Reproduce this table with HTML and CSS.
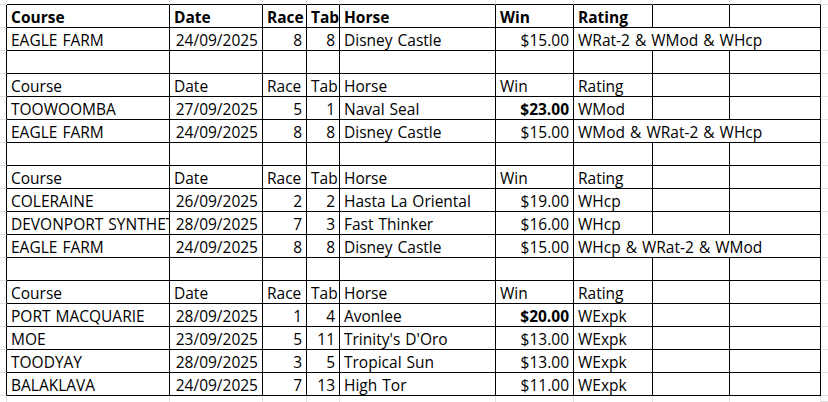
FILE: index.html
```html
<!DOCTYPE html>
<html lang="en">
<head>
<meta charset="utf-8">
<title>Ratings</title>
<link rel="stylesheet" href="styles.css">
</head>
<body>
<div class="sheet">
  <div class="row top">
    <div class="m"></div><div></div><div></div><div></div><div></div><div></div><div></div><div></div><div></div><div></div><div class="r"></div>
  </div>

  <div class="row hdr bold">
    <div class="m"></div><div class="c">Course</div><div class="c">Date</div><div class="c">Race</div><div class="c">Tab</div><div class="c">Horse</div><div class="c">Win</div><div class="c">Rating</div><div class="c"></div><div class="c"></div><div class="r"></div>
  </div>
  <div class="row">
    <div class="m"></div><div class="c">EAGLE FARM</div><div class="c n">24/09/2025</div><div class="c n">8</div><div class="c n">8</div><div class="c">Disney Castle</div><div class="c n">$15.00</div><div class="c span3">WRat-2 &amp; WMod &amp; WHcp</div><div class="r"></div>
  </div>
  <div class="row">
    <div class="m"></div><div class="c"></div><div class="c"></div><div class="c"></div><div class="c"></div><div class="c"></div><div class="c"></div><div class="c"></div><div class="c"></div><div class="c"></div><div class="r"></div>
  </div>

  <div class="row">
    <div class="m"></div><div class="c">Course</div><div class="c">Date</div><div class="c">Race</div><div class="c">Tab</div><div class="c">Horse</div><div class="c">Win</div><div class="c">Rating</div><div class="c"></div><div class="c"></div><div class="r"></div>
  </div>
  <div class="row">
    <div class="m"></div><div class="c">TOOWOOMBA</div><div class="c n">27/09/2025</div><div class="c n">5</div><div class="c n">1</div><div class="c">Naval Seal</div><div class="c n bold">$23.00</div><div class="c">WMod</div><div class="c"></div><div class="c"></div><div class="r"></div>
  </div>
  <div class="row">
    <div class="m"></div><div class="c">EAGLE FARM</div><div class="c n">24/09/2025</div><div class="c n">8</div><div class="c n">8</div><div class="c">Disney Castle</div><div class="c n">$15.00</div><div class="c span3">WMod &amp; WRat-2 &amp; WHcp</div><div class="r"></div>
  </div>
  <div class="row">
    <div class="m"></div><div class="c"></div><div class="c"></div><div class="c"></div><div class="c"></div><div class="c"></div><div class="c"></div><div class="c"></div><div class="c"></div><div class="c"></div><div class="r"></div>
  </div>

  <div class="row">
    <div class="m"></div><div class="c">Course</div><div class="c">Date</div><div class="c">Race</div><div class="c">Tab</div><div class="c">Horse</div><div class="c">Win</div><div class="c">Rating</div><div class="c"></div><div class="c"></div><div class="r"></div>
  </div>
  <div class="row">
    <div class="m"></div><div class="c">COLERAINE</div><div class="c n">26/09/2025</div><div class="c n">2</div><div class="c n">2</div><div class="c">Hasta La Oriental</div><div class="c n">$19.00</div><div class="c">WHcp</div><div class="c"></div><div class="c"></div><div class="r"></div>
  </div>
  <div class="row">
    <div class="m"></div><div class="c">DEVONPORT SYNTHETIC</div><div class="c n">28/09/2025</div><div class="c n">7</div><div class="c n">3</div><div class="c">Fast Thinker</div><div class="c n">$16.00</div><div class="c">WHcp</div><div class="c"></div><div class="c"></div><div class="r"></div>
  </div>
  <div class="row">
    <div class="m"></div><div class="c">EAGLE FARM</div><div class="c n">24/09/2025</div><div class="c n">8</div><div class="c n">8</div><div class="c">Disney Castle</div><div class="c n">$15.00</div><div class="c span3">WHcp &amp; WRat-2 &amp; WMod</div><div class="r"></div>
  </div>
  <div class="row">
    <div class="m"></div><div class="c"></div><div class="c"></div><div class="c"></div><div class="c"></div><div class="c"></div><div class="c"></div><div class="c"></div><div class="c"></div><div class="c"></div><div class="r"></div>
  </div>

  <div class="row">
    <div class="m"></div><div class="c">Course</div><div class="c">Date</div><div class="c">Race</div><div class="c">Tab</div><div class="c">Horse</div><div class="c">Win</div><div class="c">Rating</div><div class="c"></div><div class="c"></div><div class="r"></div>
  </div>
  <div class="row">
    <div class="m"></div><div class="c">PORT MACQUARIE</div><div class="c n">28/09/2025</div><div class="c n">1</div><div class="c n">4</div><div class="c">Avonlee</div><div class="c n bold">$20.00</div><div class="c">WExpk</div><div class="c"></div><div class="c"></div><div class="r"></div>
  </div>
  <div class="row">
    <div class="m"></div><div class="c">MOE</div><div class="c n">23/09/2025</div><div class="c n">5</div><div class="c n">11</div><div class="c">Trinity's D'Oro</div><div class="c n">$13.00</div><div class="c">WExpk</div><div class="c"></div><div class="c"></div><div class="r"></div>
  </div>
  <div class="row">
    <div class="m"></div><div class="c">TOODYAY</div><div class="c n">28/09/2025</div><div class="c n">3</div><div class="c n">5</div><div class="c">Tropical Sun</div><div class="c n">$13.00</div><div class="c">WExpk</div><div class="c"></div><div class="c"></div><div class="r"></div>
  </div>
  <div class="row">
    <div class="m"></div><div class="c">BALAKLAVA</div><div class="c n">24/09/2025</div><div class="c n">7</div><div class="c n">13</div><div class="c">High Tor</div><div class="c n">$11.00</div><div class="c">WExpk</div><div class="c"></div><div class="c"></div><div class="r"></div>
  </div>

  <div class="row bottom">
    <div class="m"></div><div></div><div></div><div></div><div></div><div></div><div></div><div></div><div></div><div></div><div class="r"></div>
  </div>
</div>
</body>
</html>
```

FILE: styles.css
```css
html, body {
  margin: 0;
  padding: 0;
  background: #ffffff;
}

body {
  font-family: "Open Sans", "Liberation Sans", sans-serif;
  font-size: 15.5px;
  word-spacing: 1px;
  color: #000000;
}

.sheet {
  display: grid;
  width: 828px;
  height: 402px;
  grid-template-columns: 7px 163px 93px 44px 33px 156px 78px 79px 77px 91px 1fr;
  grid-template-rows: 5px repeat(17, 23px) 1fr;
  overflow: hidden;
}

.row {
  display: contents;
}

.sheet > .row > div {
  box-sizing: border-box;
  min-width: 0;
}

/* gridlines of the sheet outside the bordered table */
.top > div {
  border-right: 1px solid #e1e1e1;
  border-bottom: 1px solid #000000;
}

.top > .m,
.top > .r {
  border-bottom-color: #e1e1e1;
}

.bottom > div {
  border-right: 1px solid #e1e1e1;
}

.m {
  border-right: 1px solid #000000;
  border-bottom: 1px solid #e1e1e1;
}

.r {
  border-bottom: 1px solid #e1e1e1;
}

.top > .r,
.bottom > .r {
  border-right: none;
}

.bottom > .m {
  border-right-color: #e1e1e1;
  border-bottom: none;
}

/* table cells */
.c {
  border-right: 1px solid #000000;
  border-bottom: 1px solid #000000;
  display: flex;
  align-items: flex-end;
  padding: 0 4px 0 4px;
  line-height: 20px;
  white-space: nowrap;
  overflow: hidden;
}

.n {
  justify-content: flex-end;
}

.span3 {
  grid-column: span 3;
}

.bold,
.bold > .c {
  font-weight: 700;
}
```
